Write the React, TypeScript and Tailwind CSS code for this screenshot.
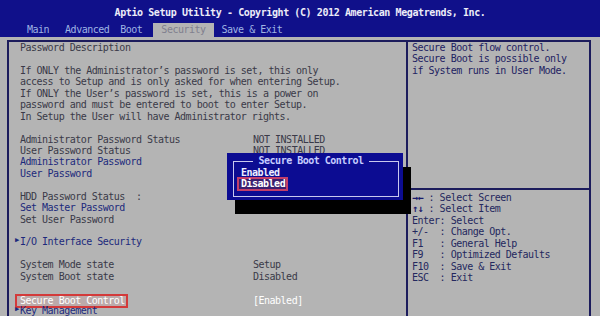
const tabs = [
  { label: "Main", ml: "ml-[27px]" },
  { label: "Advanced", ml: "ml-[16px]" },
  { label: "Boot", ml: "ml-[11px]" },
  { label: "Security", ml: "ml-[11px]", active: true },
  { label: "Save & Exit", ml: "ml-[8px]" },
];

const help = [
  ["→←", " : Select Screen"],
  ["↑↓", " : Select Item"],
  ["", "Enter: Select"],
  ["", "+/-  : Change Opt."],
  ["", "F1   : General Help"],
  ["", "F9   : Optimized Defaults"],
  ["", "F10  : Save & Exit"],
  ["", "ESC  : Exit"],
];

function Row({ label, value, link, arrow }: { label?: string; value?: string; link?: boolean; arrow?: boolean }) {
  return (
    <div className="grid grid-cols-[233px_1fr] h-[11.45px] items-center">
      <span className={`relative whitespace-pre ${link ? "text-[#1c2a7c]" : "text-[#3a3a48]"}`}>
        {arrow && <span className="absolute left-[-5px] top-[-1px] text-[7px] text-[#1c2a7c]">▶</span>}
        {label}
      </span>
      <span className="whitespace-pre text-[#3a3a48]">{value}</span>
    </div>
  );
}

function Blank() {
  return <div className="h-[11.45px]" />;
}

export default function App() {
  return (
    <div className="relative w-[600px] h-[316px] overflow-hidden bg-[#b4b4b4] font-['DejaVu_Sans_Mono',monospace] text-[10px] tracking-[-0.5px] leading-[11.45px]">
      {/* Header */}
      <div className="h-[37px] bg-[#10108a] flex flex-col">
        <div className="mt-[7px] h-[12px] text-center font-bold text-[#ececf8] tracking-[-0.4px]">
          Aptio Setup Utility - Copyright (C) 2012 American Megatrends, Inc.
        </div>
        <div className="mt-[4px] h-[14px] flex">
          {tabs.map((t) => (
            <span
              key={t.label}
              className={`${t.ml} h-[14px] flex items-center ${t.active ? "bg-[#b4b4b4] text-[#80808e] px-[8px]" : "text-[#9fb4e4]"}`}
            >
              {t.label}
            </span>
          ))}
        </div>
      </div>

      {/* Body */}
      <div className="flex pt-[3px]">
        <div className="ml-[7px] w-[399px] h-[300px] border-l-2 border-t-2 border-[#1c1c5c] pl-[11px]">
          <Row label="Password Description" />
          <Blank />
          <Row label="If ONLY the Administrator’s password is set, this only" />
          <Row label="access to Setup and is only asked for when entering Setup." />
          <Row label="If ONLY the User’s password is set, this is a power on" />
          <Row label="password and must be entered to boot to enter Setup." />
          <Row label="In Setup the User will have Administrator rights." />
          <Blank />
          <Row label="Administrator Password Status" value="NOT INSTALLED" />
          <Row label="User Password Status" value="NOT INSTALLED" />
          <Row label="Administrator Password" link />
          <Row label="User Password" link />
          <Blank />
          <Row label="HDD Password Status  :" />
          <Row label="Set Master Password" link />
          <Row label="Set User Password" />
          <Blank />
          <Row label="I/O Interface Security" link arrow />
          <Blank />
          <Row label="System Mode state" value="Setup" />
          <Row label="System Boot state" value="Disabled" />
          <Blank />
          <div className="grid grid-cols-[233px_1fr] h-[11.45px] items-center">
            <span className="ml-[-5px] w-[113px] h-[14px] border-2 border-[#d33a3a] bg-[#bcaaaa] text-white pl-[3px] flex items-center">
              Secure Boot Control
            </span>
            <span className="text-white">[Enabled]</span>
          </div>
          <Row label="Key Management" link arrow />
        </div>

        <div className="w-[185px] h-[300px] border-l-2 border-t-2 border-r-2 border-[#1c1c5c] flex flex-col">
          <div className="h-[146px] pl-[4px] text-[#1e2262]">
            <div>Secure Boot flow control.</div>
            <div>Secure Boot is possible only</div>
            <div>if System runs in User Mode.</div>
          </div>
          <div className="h-[2px] bg-[#1c1c5c]" />
          <div className="pl-[4px] pt-[2px] text-[#24285e]">
            {help.map(([a, b], i) => (
              <div key={i} className="whitespace-pre h-[11.45px] overflow-hidden">
                {a && <span className="inline-block align-top h-[11.45px] font-bold tracking-[-0.5px] text-[#1a1a6a]">{a}</span>}
                {b}
              </div>
            ))}
          </div>
        </div>
      </div>

      {/* Popup */}
      <div className="absolute left-[227px] top-[153px] w-[176px] h-[47px] bg-[#0c0c92] shadow-[8px_14px_0_#000]">
        <div className="absolute left-[6px] top-[8px] right-[4px] bottom-[3px] border border-[#c8c8ee]" />
        <div className="absolute left-0 right-0 top-[2px] flex justify-center">
          <span className="bg-[#0c0c92] px-[6px] font-bold text-[#c6ccff] ml-[-8px]">Secure Boot Control</span>
        </div>
        <div className="absolute left-[14px] top-[14px] font-bold text-[#eeeeff]">Enabled</div>
        <div className="absolute left-[10px] top-[24px] h-[14px] w-[51px] border-2 border-[#c23e6a] bg-[#3a1e6e] pl-[2px] flex items-center font-bold text-white">
          Disabled
        </div>
      </div>
    </div>
  );
}
